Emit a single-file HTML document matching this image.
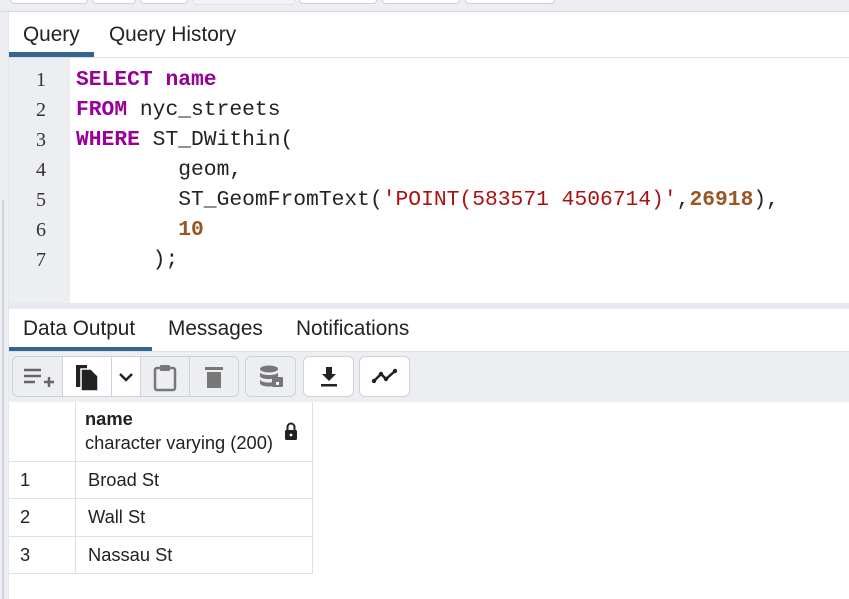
<!DOCTYPE html>
<html><head><meta charset="utf-8"><style>
*{margin:0;padding:0;box-sizing:border-box}
body{width:849px;height:599px;overflow:hidden;background:#fff;font-family:"Liberation Sans",sans-serif;position:relative}
.abs{position:absolute}
.code{font-family:"Liberation Mono",monospace;font-size:21.3px;line-height:30px;white-space:pre;color:#222}
.k{color:#990099;font-weight:bold}.n{color:#995522;font-weight:bold}.s{color:#aa1111}
.btn{position:absolute;top:356px;height:41px;background:#fff;border:1px solid #cdd1d9;border-radius:6px}
.grp{background:#eceef2}
.sep{position:absolute;top:0;bottom:0;width:1px;background:#cdd1d9}
.cell{position:absolute;font-size:18.3px;color:#222}
.tab{position:absolute;font-size:20.8px;color:#222}
</style></head><body>
<div class="abs" style="left:0;top:0;width:849px;height:12px;background:#eceef2;border-bottom:1px solid #d6d9df"></div>
<div class="abs" style="left:10px;top:-6px;width:78px;height:10px;border:1px solid #cdd1d9;border-radius:4px;background:#fff"></div>
<div class="abs" style="left:92px;top:-6px;width:44px;height:10px;border:1px solid #cdd1d9;border-radius:4px;background:#fff"></div>
<div class="abs" style="left:140px;top:-6px;width:48px;height:10px;border:1px solid #cdd1d9;border-radius:4px;background:#fff"></div>
<div class="abs" style="left:193px;top:-6px;width:102px;height:11px;border:1px solid #dde0e5;border-radius:4px;background:#f2f4f7"></div>
<div class="abs" style="left:299px;top:-6px;width:78px;height:10px;border:1px solid #cdd1d9;border-radius:4px;background:#fff"></div>
<div class="abs" style="left:382px;top:-6px;width:78px;height:10px;border:1px solid #cdd1d9;border-radius:4px;background:#fff"></div>
<div class="abs" style="left:465px;top:-6px;width:90px;height:10px;border:1px solid #cdd1d9;border-radius:4px;background:#fff"></div>
<div class="abs" style="left:0;top:12px;width:8px;height:587px;background:#eceef2"></div>
<div class="abs" style="left:2px;top:200px;width:2px;height:399px;background:#cfd3db"></div>
<div class="abs" style="left:8px;top:12px;width:1px;height:587px;background:#e3e6eb"></div>
<div class="tab" style="left:23px;top:23px">Query</div>
<div class="tab" style="left:109px;top:23px">Query History</div>
<div class="abs" style="left:9px;top:52px;width:85px;height:5px;background:#326690"></div>
<div class="abs" style="left:9px;top:57px;width:840px;height:1px;background:#dde0e6"></div>
<div class="abs" style="left:9px;top:58px;width:61px;height:245px;background:#eceef2"></div>
<div class="abs code" style="left:28px;top:65px;color:#333;font-family:'Liberation Serif',serif;font-size:20px;text-align:center;width:26px">1
2
3
4
5
6
7</div>
<div class="abs code" style="left:76px;top:65px"><span class="k">SELECT name</span>
<span class="k">FROM</span> nyc_streets
<span class="k">WHERE</span> ST_DWithin(
        geom,
        ST_GeomFromText(<span class="s">'POINT(583571 4506714)'</span>,<span class="n">26918</span>),
        <span class="n">10</span>
      );</div>
<div class="abs" style="left:9px;top:303px;width:840px;height:6px;background:#e6e9ee"></div>
<div class="tab" style="left:23px;top:317px">Data Output</div>
<div class="tab" style="left:168px;top:317px">Messages</div>
<div class="tab" style="left:296px;top:317px">Notifications</div>
<div class="abs" style="left:9px;top:347px;width:143px;height:4px;background:#326690"></div>
<div class="abs" style="left:9px;top:351px;width:840px;height:51px;background:#eceef2;border-top:1px solid #dde0e6"></div>
<div class="btn grp" style="left:12px;width:227px">
 <div class="sep" style="left:49px"></div><div class="sep" style="left:98px"></div><div class="sep" style="left:127px"></div><div class="sep" style="left:176px"></div>
 <div class="abs" style="left:50px;top:0;width:48px;height:39px;background:#fff"></div>
 <div class="abs" style="left:99px;top:0;width:28px;height:39px;background:#fff"></div>
 <svg class="abs" style="left:9px;top:8px" width="34" height="24" viewBox="0 0 34 24"><path d="M2 5h17M2 11h17M2 17h11M22 17h10M27 12v10" stroke="#666" stroke-width="2.5" fill="none"/></svg>
 <svg class="abs" style="left:60px;top:6px" width="28" height="30" viewBox="0 0 28 30"><path d="M3 2h11v22h-11z" fill="#222"/><path d="M8 6h10l7 7v15h-17z" fill="#222" stroke="#fff" stroke-width="1.5"/></svg>
 <svg class="abs" style="left:104px;top:13px" width="18" height="14" viewBox="0 0 18 14"><path d="M3 4l6 6 6-6" stroke="#222" stroke-width="2.5" fill="none"/></svg>
 <svg class="abs" style="left:140px;top:7px" width="24" height="28" viewBox="0 0 24 28"><rect x="2" y="4" width="20" height="22" rx="2" fill="none" stroke="#777" stroke-width="2.5"/><rect x="7" y="1" width="10" height="6" rx="1" fill="#777"/></svg>
 <svg class="abs" style="left:191px;top:8px" width="20" height="26" viewBox="0 0 20 26"><rect x="1" y="2" width="18" height="3" fill="#777"/><path d="M3 7h14v16h-14z" fill="#777"/></svg>
</div>
<div class="btn grp" style="left:245px;width:51px"><svg class="abs" style="left:13px;top:7px" width="26" height="26" viewBox="0 0 26 26"><ellipse cx="10" cy="5" rx="9" ry="3.5" fill="#777"/><path d="M1 8c0 4 18 4 18 0v4c0 4-18 4-18 0zM1 15c0 4 12 4 12 3v4c0 1-12 1-12-3z" fill="#777"/><rect x="13" y="13" width="11" height="10" rx="1" fill="#777"/><rect x="17" y="18" width="3" height="3" fill="#fff"/></svg></div>
<div class="btn" style="left:303px;width:51px"><svg class="abs" style="left:14px;top:8px" width="22" height="24" viewBox="0 0 22 24"><path d="M8 2h6v7h4l-7 7-7-7h4z" fill="#222"/><rect x="3" y="19" width="16" height="2.5" fill="#222"/></svg></div>
<div class="btn" style="left:359px;width:51px"><svg class="abs" style="left:11px;top:10px" width="28" height="20" viewBox="0 0 28 20"><path d="M3 14l7-7 5 5 9-8" stroke="#222" stroke-width="2.5" fill="none"/><circle cx="3" cy="14" r="2.2" fill="#222"/><circle cx="10" cy="7" r="2.2" fill="#222"/><circle cx="15" cy="12" r="2.2" fill="#222"/><circle cx="24" cy="4" r="2.2" fill="#222"/></svg></div>
<div class="abs" style="left:9px;top:402px;width:304px;height:172px;border-right:1px solid #dde0e6;border-bottom:1px solid #dde0e6"></div>
<div class="abs" style="left:75px;top:402px;width:1px;height:172px;background:#dde0e6"></div>
<div class="abs" style="left:9px;top:461px;width:304px;height:1px;background:#dde0e6"></div>
<div class="abs" style="left:9px;top:498px;width:304px;height:1px;background:#dde0e6"></div>
<div class="abs" style="left:9px;top:536px;width:304px;height:1px;background:#dde0e6"></div>
<div class="cell" style="left:85px;top:408px;font-weight:bold">name</div>
<div class="cell" style="left:85px;top:432px">character varying (200)</div>
<svg class="abs" style="left:284px;top:422px" width="14" height="18" viewBox="0 0 14 18"><path d="M3.5 8V5a3.5 3.5 0 0 1 7 0v3" stroke="#222" stroke-width="2" fill="none"/><rect x="1" y="8" width="12" height="10" rx="1.5" fill="#222"/><circle cx="7" cy="13" r="1.4" fill="#fff"/></svg>
<div class="cell" style="left:20px;top:469px">1</div><div class="cell" style="left:88px;top:469px">Broad St</div>
<div class="cell" style="left:20px;top:506px">2</div><div class="cell" style="left:88px;top:506px">Wall St</div>
<div class="cell" style="left:20px;top:544px">3</div><div class="cell" style="left:88px;top:544px">Nassau St</div>
</body></html>
